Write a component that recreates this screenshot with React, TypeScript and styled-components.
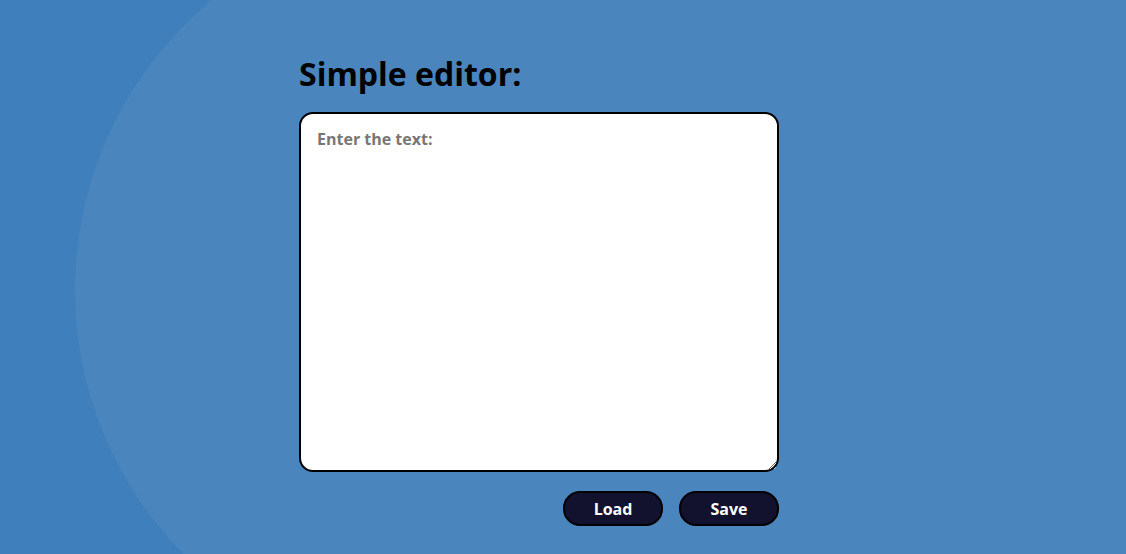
import React from "react";
import styled, { createGlobalStyle } from "styled-components";

const Global = createGlobalStyle`
  html, body {
    margin: 0;
    padding: 0;
    height: 100%;
  }
  body {
    background: #3f7fbb;
    font-family: "Open Sans", "Liberation Sans", sans-serif;
    overflow: hidden;
  }
`;

const Page = styled.div`
  position: relative;
  width: 100%;
  height: 554px;
  overflow: hidden;
  background: #3f7fbb;
`;

const Glow = styled.div`
  position: absolute;
  left: 75px;
  right: -400px;
  top: -85px;
  height: 750px;
  border-radius: 375px 0 0 375px;
  background: #4b85bd;
`;

const Content = styled.main`
  position: relative;
  display: flex;
  flex-direction: column;
  width: 480px;
  padding: 52px 0 0 299px;
`;

const Title = styled.h1`
  margin: 0 0 16px;
  font-size: 32px;
  font-weight: 700;
  line-height: 44px;
  color: #000;
`;

const Editor = styled.textarea`
  box-sizing: border-box;
  width: 480px;
  height: 360px;
  margin: 0;
  padding: 14px 16px;
  border: 2px solid #000;
  border-radius: 14px;
  background: #fff;
  font-family: "Open Sans", "Liberation Sans", sans-serif;
  font-size: 16px;
  font-weight: 700;
  color: #222;
  outline: none;
  display: block;

  &::placeholder {
    color: #777;
  }
`;

const Actions = styled.div`
  display: flex;
  justify-content: flex-end;
  gap: 16px;
  margin-top: 19px;
`;

const Button = styled.button`
  box-sizing: border-box;
  width: 100px;
  height: 35px;
  border: 2px solid #000;
  border-radius: 17px;
  background: #12122f;
  color: #fff;
  font-family: "Open Sans", "Liberation Sans", sans-serif;
  font-size: 16px;
  font-weight: 700;
  cursor: pointer;
`;

export default function App() {
  return (
    <Page>
      <Global />
      <Glow />
      <Content>
        <Title>Simple editor:</Title>
        <Editor placeholder="Enter the text:" />
        <Actions>
          <Button>Load</Button>
          <Button>Save</Button>
        </Actions>
      </Content>
    </Page>
  );
}
